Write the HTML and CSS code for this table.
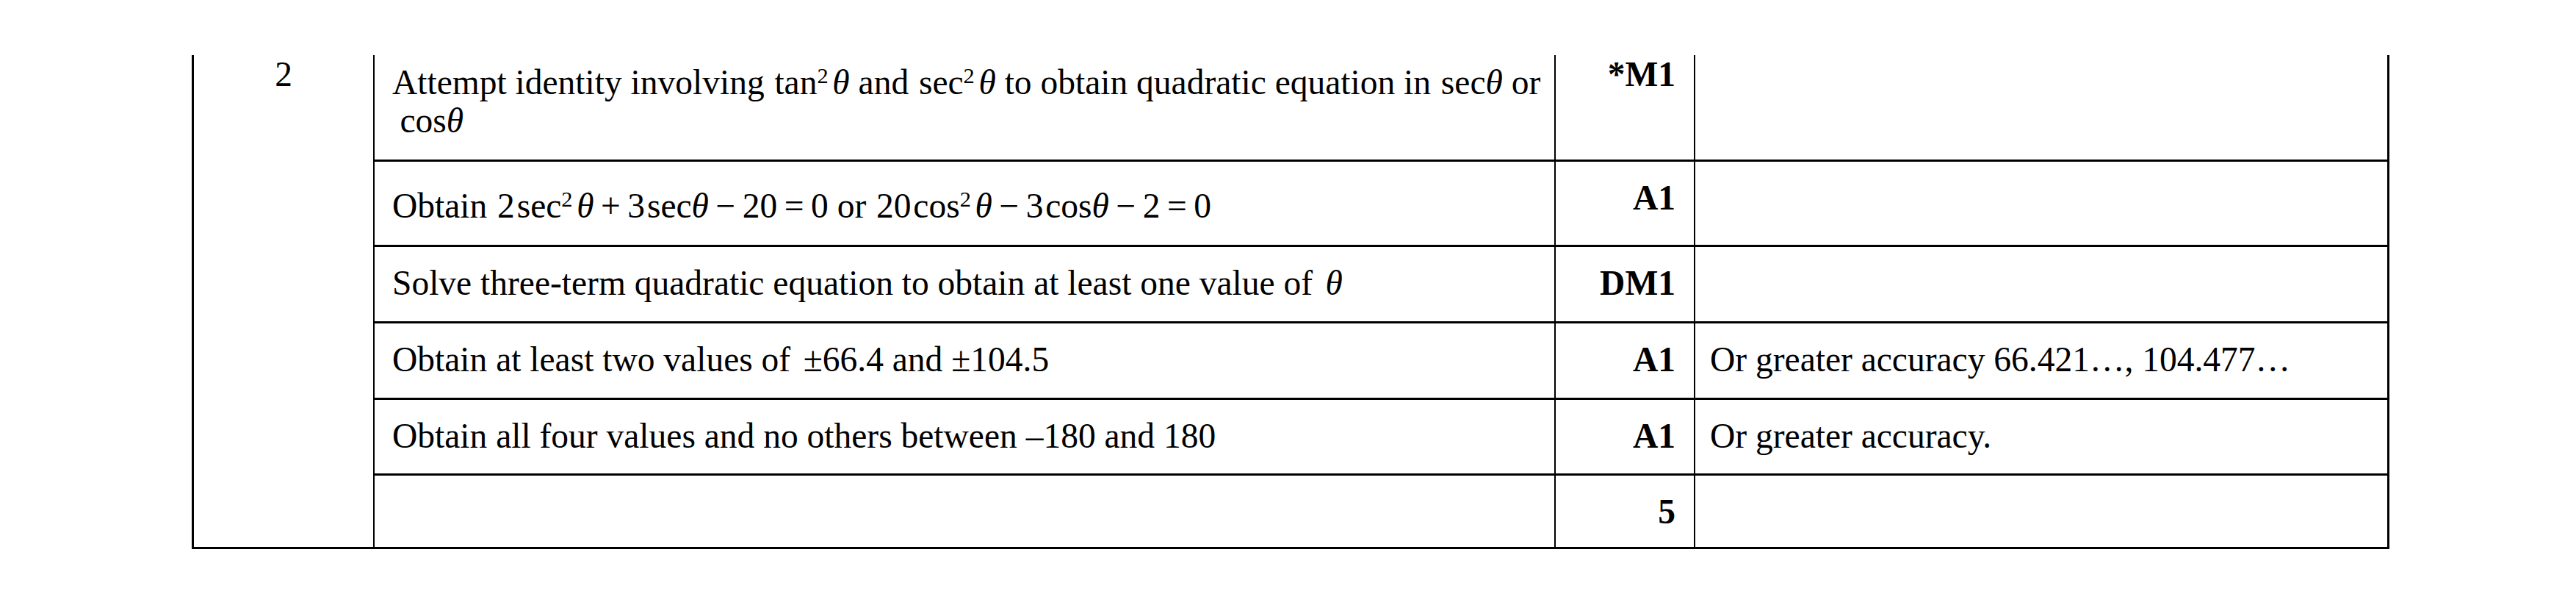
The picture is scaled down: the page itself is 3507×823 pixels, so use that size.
FILE: index.html
```html
<!DOCTYPE html>
<html lang="en">
<head>
<meta charset="utf-8">
<title>Mark scheme – Question 2</title>
<link rel="stylesheet" href="styles.css">
</head>
<body>
<div class="sheet">
<table class="ms">
  <tr class="r1">
    <td class="q" rowspan="6">2</td>
    <td class="d tall">Attempt identity involving <span class="m">tan<sup>2</sup><i class="g">θ</i></span> and <span class="m">sec<sup>2</sup><i class="g">θ</i></span> to obtain quadratic equation in <span class="m">sec<i>θ</i></span> or<br><span class="m ind">cos<i>θ</i></span></td>
    <td class="mk">*M1</td>
    <td class="c"></td>
  </tr>
  <tr class="r2">
    <td class="d tall">Obtain <span class="m">2<span class="f">sec</span><sup>2</sup><i class="g">θ</i><span class="op">+</span>3<span class="f">sec</span><i>θ</i><span class="op">−</span>20<span class="op">=</span>0</span> or <span class="m">20<span class="f">cos</span><sup>2</sup><i class="g">θ</i><span class="op">−</span>3<span class="f">cos</span><i>θ</i><span class="op">−</span>2<span class="op">=</span>0</span></td>
    <td class="mk">A1</td>
    <td class="c"></td>
  </tr>
  <tr class="r3">
    <td class="d">Solve three-term quadratic equation to obtain at least one value of <span class="m sp"><i>θ</i></span></td>
    <td class="mk">DM1</td>
    <td class="c"></td>
  </tr>
  <tr class="r4">
    <td class="d">Obtain at least two values of <span class="m sp">±66.4 and ±104.5</span></td>
    <td class="mk">A1</td>
    <td class="c">Or greater accuracy 66.421…, 104.477…</td>
  </tr>
  <tr class="r5">
    <td class="d">Obtain all four values and no others between –180 and 180</td>
    <td class="mk">A1</td>
    <td class="c">Or greater accuracy.</td>
  </tr>
  <tr class="r6">
    <td class="d"></td>
    <td class="mk">5</td>
    <td class="c"></td>
  </tr>
</table>
</div>
</body>
</html>
```

FILE: styles.css
```css
html, body {
  margin: 0;
  padding: 0;
  background: #ffffff;
}

body {
  font-family: "Liberation Serif", "Times New Roman", serif;
  font-size: 47.5px;
  color: #000000;
}

.sheet {
  padding: 75px 0 0 261px;
}

.ms {
  border-collapse: separate;
  border-spacing: 0;
  table-layout: fixed;
  width: 2992px;
}

.ms td {
  vertical-align: top;
  line-height: 1.1;
  white-space: nowrap;
  padding: 23px 0 0 0;
  border-left: 2px solid #000;
}

.ms tr + tr td {
  border-top: 3px solid #000;
}

.ms .r1 td {
  padding-top: 0;
}

.ms .r1 td.tall {
  padding-top: 11px;
}

.ms .r2 td.tall {
  padding-top: 34px;
}

.ms .r6 td {
  border-bottom: 3px solid #000;
}

.ms .r1 { height: 142px; }
.ms .r2 { height: 116px; }
.ms .r3 { height: 104px; }
.ms .r4 { height: 104px; }
.ms .r5 { height: 103px; }
.ms .r6 { height: 103px; }

.ms td.q {
  width: 244px;
  border-left: 3px solid #000;
  border-bottom: 3px solid #000;
  text-align: center;
}

.ms td.d {
  width: 1574px;
  padding-left: 24px;
  padding-right: 8px;
}

.ms td.mk {
  width: 155px;
  padding-left: 8px;
  padding-right: 25px;
  text-align: right;
  font-weight: bold;
}

.ms td.c {
  width: 912px;
  padding-left: 20px;
  padding-right: 10px;
  border-right: 3px solid #000;
}

.m {
  margin-left: 0.04em;
}

.m.sp {
  margin-left: 0.12em;
}

.m i {
  font-style: italic;
}

.m .g {
  margin-left: 0.12em;
}

.m .f {
  margin-left: 0.06em;
}

.m sup {
  font-size: 0.64em;
  line-height: 0;
  vertical-align: 0.5em;
}

.m .op {
  margin: 0 0.2em;
}

.ind {
  margin-left: 0.22em;
}
```
